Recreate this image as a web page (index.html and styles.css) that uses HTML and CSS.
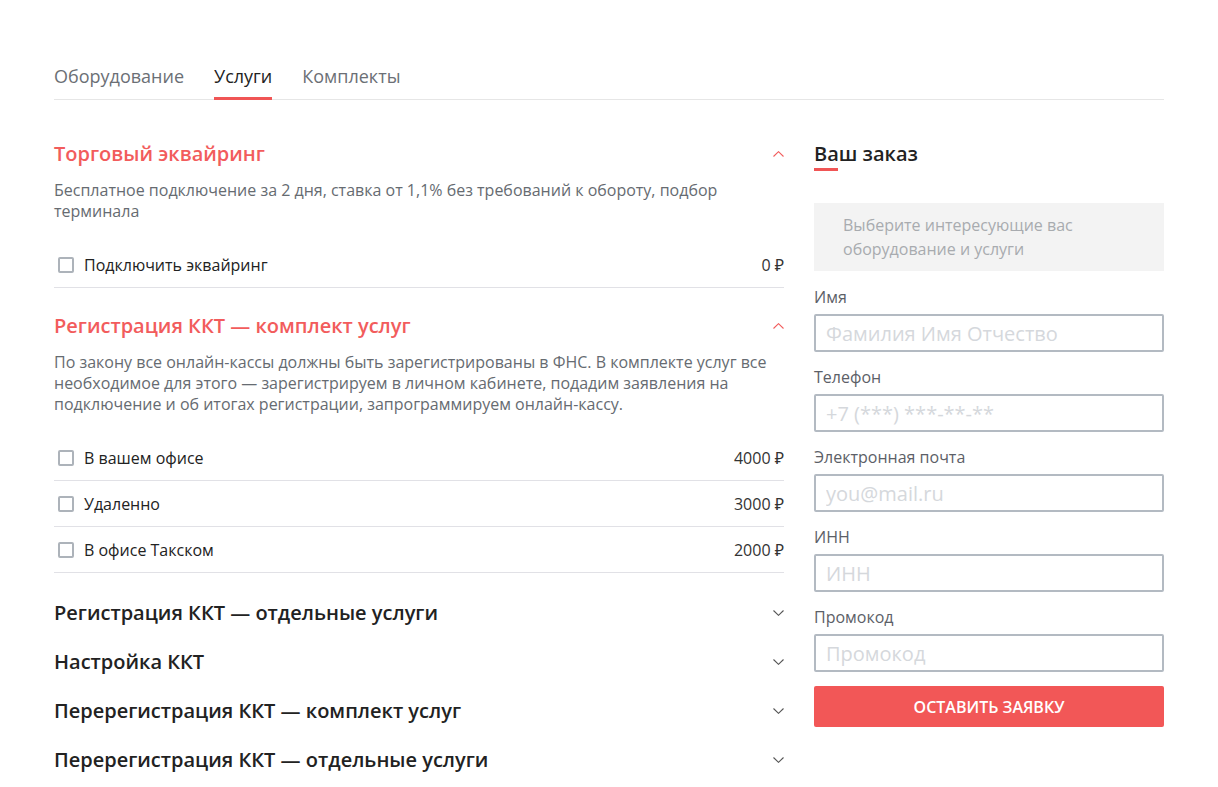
FILE: index.html
```html
<!DOCTYPE html>
<html lang="ru">
<head>
<meta charset="utf-8">
<title>Услуги</title>
<link rel="stylesheet" href="styles.css">
</head>
<body>
<div class="page">
  <nav class="tabs">
    <a class="tab">Оборудование</a>
    <a class="tab active">Услуги</a>
    <a class="tab">Комплекты</a>
  </nav>
  <div class="layout">
    <div class="services">
      <section class="acc open">
        <div class="acc-head">
          <h2 class="acc-title">Торговый эквайринг</h2>
          <svg class="chev" width="11" height="6" viewBox="0 0 11 6"><path d="M0.5 5.5 L5.5 0.7 L10.5 5.5" fill="none" stroke="currentColor" stroke-width="1.1"/></svg>
        </div>
        <p class="acc-desc">Бесплатное подключение за 2 дня, ставка от 1,1% без требований к обороту, подбор терминала</p>
        <ul class="opts">
          <li class="opt"><label class="check"><span class="box"></span>Подключить эквайринг</label><span class="price">0 ₽</span></li>
        </ul>
      </section>
      <section class="acc open">
        <div class="acc-head">
          <h2 class="acc-title">Регистрация ККТ — комплект услуг</h2>
          <svg class="chev" width="11" height="6" viewBox="0 0 11 6"><path d="M0.5 5.5 L5.5 0.7 L10.5 5.5" fill="none" stroke="currentColor" stroke-width="1.1"/></svg>
        </div>
        <p class="acc-desc">По закону все онлайн-кассы должны быть зарегистрированы в ФНС. В комплекте услуг все необходимое для этого — зарегистрируем в личном кабинете, подадим заявления на подключение и об итогах регистрации, запрограммируем онлайн-кассу.</p>
        <ul class="opts">
          <li class="opt"><label class="check"><span class="box"></span>В вашем офисе</label><span class="price">4000 ₽</span></li>
          <li class="opt"><label class="check"><span class="box"></span>Удаленно</label><span class="price">3000 ₽</span></li>
          <li class="opt"><label class="check"><span class="box"></span>В офисе Такском</label><span class="price">2000 ₽</span></li>
        </ul>
      </section>
      <section class="acc">
        <div class="acc-head">
          <h2 class="acc-title">Регистрация ККТ — отдельные услуги</h2>
          <svg class="chev" width="11" height="6" viewBox="0 0 11 6"><path d="M0.5 0.5 L5.5 5.3 L10.5 0.5" fill="none" stroke="currentColor" stroke-width="1.1"/></svg>
        </div>
      </section>
      <section class="acc">
        <div class="acc-head">
          <h2 class="acc-title">Настройка ККТ</h2>
          <svg class="chev" width="11" height="6" viewBox="0 0 11 6"><path d="M0.5 0.5 L5.5 5.3 L10.5 0.5" fill="none" stroke="currentColor" stroke-width="1.1"/></svg>
        </div>
      </section>
      <section class="acc">
        <div class="acc-head">
          <h2 class="acc-title">Перерегистрация ККТ — комплект услуг</h2>
          <svg class="chev" width="11" height="6" viewBox="0 0 11 6"><path d="M0.5 0.5 L5.5 5.3 L10.5 0.5" fill="none" stroke="currentColor" stroke-width="1.1"/></svg>
        </div>
      </section>
      <section class="acc">
        <div class="acc-head">
          <h2 class="acc-title">Перерегистрация ККТ — отдельные услуги</h2>
          <svg class="chev" width="11" height="6" viewBox="0 0 11 6"><path d="M0.5 0.5 L5.5 5.3 L10.5 0.5" fill="none" stroke="currentColor" stroke-width="1.1"/></svg>
        </div>
      </section>
    </div>
    <aside class="order">
      <h2 class="order-title">Ваш заказ</h2>
      <div class="order-empty">Выберите интересующие вас оборудование и услуги</div>
      <form class="form">
        <label class="field"><span class="field-label">Имя</span><input class="input" type="text" placeholder="Фамилия Имя Отчество"></label>
        <label class="field"><span class="field-label">Телефон</span><input class="input" type="text" placeholder="+7 (***) ***-**-**"></label>
        <label class="field"><span class="field-label">Электронная почта</span><input class="input" type="text" placeholder="you@mail.ru"></label>
        <label class="field"><span class="field-label">ИНН</span><input class="input" type="text" placeholder="ИНН"></label>
        <label class="field"><span class="field-label">Промокод</span><input class="input" type="text" placeholder="Промокод"></label>
        <button class="submit" type="button">Оставить заявку</button>
      </form>
    </aside>
  </div>
</div>
</body>
</html>
```
FILE: styles.css
```css
* { box-sizing: border-box; }
html, body { margin: 0; padding: 0; background: #fff; }
body {
  font-family: "Open Sans", "Noto Sans", sans-serif;
  color: #222;
}
.page {
  width: 1110px;
  margin: 0 0 0 54px;
  padding-top: 64px;
}
.tabs {
  display: flex;
  gap: 30px;
  border-bottom: 1px solid #e6e6e6;
}
.tab {
  font-size: 18px;
  line-height: 24px;
  color: #6b6f75;
  padding-bottom: 9px;
  border-bottom: 3px solid transparent;
  margin-bottom: -1px;
  cursor: pointer;
}
.tab.active {
  color: #222;
  border-bottom-color: #f05555;
}
.layout {
  display: flex;
  gap: 30px;
  align-items: flex-start;
}
.services {
  width: 730px;
  padding-top: 17px;
}
.acc { padding-top: 21px; }
.acc:first-child { padding-top: 23px; }
.acc.open + .acc { padding-top: 24px; }
.acc.open + .acc:not(.open) { padding-top: 26px; }
.acc-head {
  display: flex;
  justify-content: space-between;
  align-items: center;
}
.acc-title {
  margin: 0;
  font-size: 20px;
  line-height: 28px;
  font-weight: 600;
  color: #222;
}
.acc.open .acc-title { color: #f25c5c; }
.chev {
  color: #555;
  margin-right: 0;
}
.acc.open .chev { color: #f25c5c; }
.acc-desc {
  margin: 12px 0 0;
  font-size: 16px;
  line-height: 21px;
  color: #666b71;
}
.opts {
  list-style: none;
  margin: 20px 0 0;
  padding: 0;
}
.opt {
  display: flex;
  justify-content: space-between;
  align-items: center;
  height: 46px;
  border-bottom: 1px solid #e1e1e6;
  font-size: 16px;
  color: #222;
}
.check {
  display: flex;
  align-items: center;
  gap: 10px;
  padding-left: 4px;
}
.box {
  width: 16px;
  height: 16px;
  border: 2px solid #adb3ba;
  border-radius: 2px;
}
.price { color: #333; }

.order {
  width: 350px;
  padding-top: 40px;
}
.order-title {
  margin: 0;
  font-size: 20px;
  line-height: 28px;
  font-weight: 600;
  color: #222;
  padding-bottom: 2px;
}
.order-title::after {
  content: "";
  display: block;
  width: 24px;
  height: 3px;
  background: #f05555;
}
.order-empty {
  margin-top: 30px;
  background: #f3f3f3;
  padding: 10px 29px;
  font-size: 16px;
  line-height: 24px;
  color: #a8abaf;
}
.form {
  display: flex;
  flex-direction: column;
  padding-top: 16px;
}
.field {
  display: flex;
  flex-direction: column;
  margin-bottom: 15px;
}
.field-label {
  font-size: 16px;
  line-height: 20px;
  color: #5c6067;
  margin-bottom: 7px;
}
.input {
  height: 38px;
  border: 2px solid #b3bac2;
  border-radius: 2px;
  padding: 0 10px;
  font-family: inherit;
  font-size: 20px;
  color: #222;
  outline: none;
}
.input::placeholder { color: #d5d8dc; }
.submit {
  margin-top: -1px;
  height: 41px;
  border: 0;
  border-radius: 2px;
  background: #f25757;
  color: #fff;
  font-family: inherit;
  font-size: 16px;
  font-weight: 600;
  text-transform: uppercase;
  cursor: pointer;
}
```
